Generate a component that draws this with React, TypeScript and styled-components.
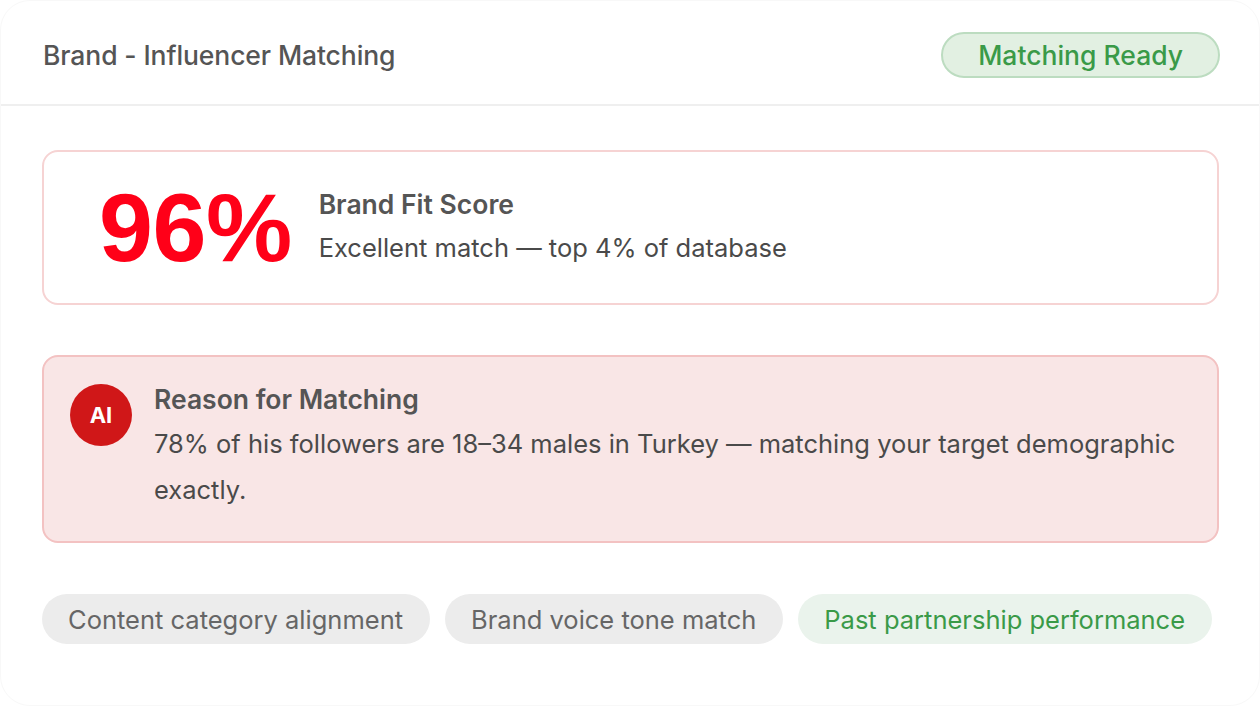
import React from 'react';
import styled, { createGlobalStyle } from 'styled-components';

const GlobalStyle = createGlobalStyle`
  html, body {
    margin: 0;
    padding: 0;
    background: #ffffff;
  }
  body {
    font-family: Inter, 'Liberation Sans', sans-serif;
  }
`;

const Card = styled.div`
  box-sizing: border-box;
  width: 1260px;
  height: 706px;
  background: #ffffff;
  border: 1px solid #f8f8f8;
  border-radius: 30px;
  overflow: hidden;
`;

const Header = styled.div`
  display: flex;
  align-items: center;
  justify-content: space-between;
  height: 105px;
  padding: 4px 39px 0 42px;
  box-sizing: border-box;
  border-bottom: 2px solid #efefef;
`;

const Title = styled.h1`
  margin: 0;
  font-size: 26.5px;
  font-weight: 500;
  color: #555555;
  letter-spacing: -0.1px;
`;

const StatusBadge = styled.span`
  display: inline-flex;
  align-items: center;
  height: 46px;
  box-sizing: border-box;
  padding: 0 35px;
  border-radius: 999px;
  background: #e2f0e2;
  border: 2px solid #bcdcc0;
  color: #3a9a48;
  font-size: 26.5px;
  font-weight: 500;
`;

const Body = styled.div`
  display: flex;
  flex-direction: column;
  padding: 44px 40px 0 41px;
`;

const ScoreCard = styled.div`
  display: flex;
  align-items: center;
  gap: 27px;
  height: 155px;
  box-sizing: border-box;
  padding: 0 54px 0 55px;
  border: 2px solid #f6d3d3;
  border-radius: 16px;
`;

const Score = styled.div`
  font-family: 'Liberation Sans', Arial, sans-serif;
  font-size: 97px;
  font-weight: 700;
  color: #ff0018;
  letter-spacing: -0.5px;
  line-height: 1;
`;

const ScoreText = styled.div`
  display: flex;
  flex-direction: column;
  gap: 13px;
  margin-top: -5px;
`;

const Heading = styled.div`
  font-size: 26.5px;
  font-weight: 600;
  color: #555555;
  line-height: 32px;
`;

const Text = styled.div<{ $lh?: number }>`
  font-size: 25.5px;
  font-weight: 400;
  color: #4a4a4a;
  line-height: ${p => p.$lh ?? 46}px;
`;

const ReasonBox = styled.div`
  display: flex;
  gap: 22px;
  margin-top: 50px;
  padding: 26px 30px 28px 26px;
  background: #f9e6e6;
  border: 2px solid #f3c2c2;
  border-radius: 16px;
`;

const AiBadge = styled.div`
  flex: none;
  display: flex;
  align-items: center;
  justify-content: center;
  width: 62px;
  height: 62px;
  margin-top: 1px;
  border-radius: 50%;
  background: #d01718;
  color: #ffffff;
  font-size: 22px;
  font-weight: 700;
`;

const ReasonContent = styled.div`
  display: flex;
  flex-direction: column;
  gap: 6px;
`;

const Chips = styled.div`
  display: flex;
  gap: 15px;
  margin-top: 51px;
`;

const Chip = styled.span<{ $good?: boolean }>`
  display: inline-flex;
  align-items: center;
  height: 50px;
  padding: 0 27px 0 26px;
  border-radius: 999px;
  background: ${p => (p.$good ? '#eaf3ec' : '#ececec')};
  color: ${p => (p.$good ? '#3a9a48' : '#666666')};
  font-size: 25.5px;
`;

const chips = [
  { label: 'Content category alignment', good: false },
  { label: 'Brand voice tone match', good: false },
  { label: 'Past partnership performance', good: true },
];

export default function App() {
  return (
    <>
      <GlobalStyle />
      <Card>
        <Header>
          <Title>Brand - Influencer Matching</Title>
          <StatusBadge>Matching Ready</StatusBadge>
        </Header>
        <Body>
          <ScoreCard>
            <Score>96%</Score>
            <ScoreText>
              <Heading>Brand Fit Score</Heading>
              <Text $lh={30}>Excellent match — top 4% of database</Text>
            </ScoreText>
          </ScoreCard>
          <ReasonBox>
            <AiBadge>AI</AiBadge>
            <ReasonContent>
              <Heading>Reason for Matching</Heading>
              <Text>
                78% of his followers are 18–34 males in Turkey — matching your target demographic
                exactly.
              </Text>
            </ReasonContent>
          </ReasonBox>
          <Chips>
            {chips.map(c => (
              <Chip key={c.label} $good={c.good}>
                {c.label}
              </Chip>
            ))}
          </Chips>
        </Body>
      </Card>
    </>
  );
}
